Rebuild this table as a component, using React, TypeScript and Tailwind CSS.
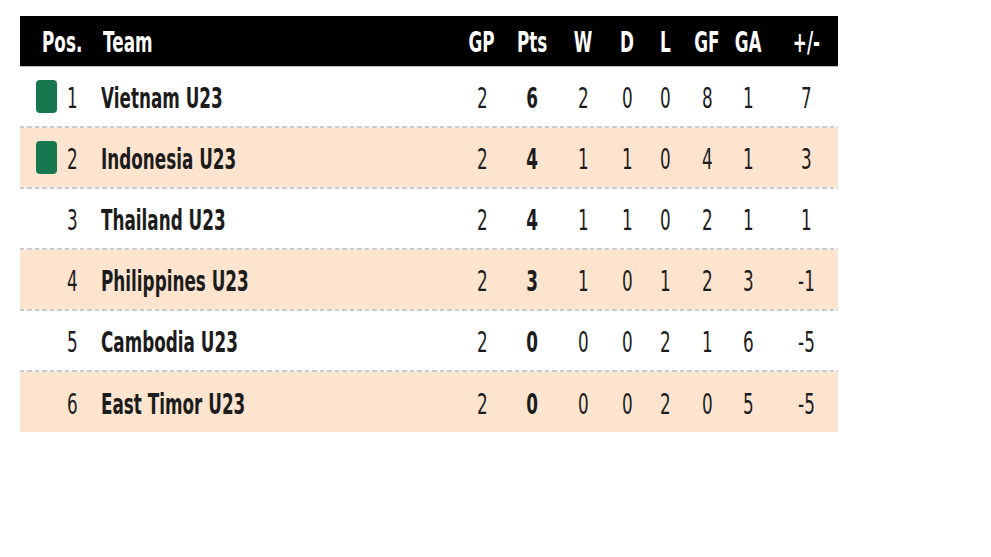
const teams = [
  { pos: 1, name: "Vietnam U23", gp: 2, pts: 6, w: 2, d: 0, l: 0, gf: 8, ga: 1, diff: "7", qualified: true },
  { pos: 2, name: "Indonesia U23", gp: 2, pts: 4, w: 1, d: 1, l: 0, gf: 4, ga: 1, diff: "3", qualified: true },
  { pos: 3, name: "Thailand U23", gp: 2, pts: 4, w: 1, d: 1, l: 0, gf: 2, ga: 1, diff: "1", qualified: false },
  { pos: 4, name: "Philippines U23", gp: 2, pts: 3, w: 1, d: 0, l: 1, gf: 2, ga: 3, diff: "-1", qualified: false },
  { pos: 5, name: "Cambodia U23", gp: 2, pts: 0, w: 0, d: 0, l: 2, gf: 1, ga: 6, diff: "-5", qualified: false },
  { pos: 6, name: "East Timor U23", gp: 2, pts: 0, w: 0, d: 0, l: 2, gf: 0, ga: 5, diff: "-5", qualified: false },
];

// narrow text: the source table uses a squeezed Verdana-like face
function Narrow({ children, left }: { children: React.ReactNode; left?: boolean }) {
  return (
    <span className={`inline-block whitespace-nowrap scale-x-[0.58] ${left ? "origin-left" : "origin-center"}`}>
      {children}
    </span>
  );
}

function Stat({ w, children, bold, extra }: { w: string; children: React.ReactNode; bold?: boolean; extra?: string }) {
  return (
    <div className={`flex shrink-0 justify-center pt-[4px] ${w} ${bold ? "font-bold" : ""} ${extra ?? ""}`}>
      <Narrow>{children}</Narrow>
    </div>
  );
}

const cols = ["w-[50px]", "w-[51px]", "w-[50px]", "w-[38px]", "w-[38px]", "w-[46px]", "w-[36px]", "w-[72px]"];

export default function App() {
  return (
    <div className="min-h-[557px] bg-white pl-[20px] pt-[16px] font-['DejaVu_Sans','Verdana',sans-serif] text-[29px] leading-none">
      <div className="w-[818px]">
        <div className="flex h-[51px] items-center border-b border-[#bdbdbd] bg-black font-bold text-white">
          <div className="flex w-[437px] shrink-0 items-center pl-[22px] pt-[3px]">
            <div className="w-[61px]">
              <Narrow left>Pos.</Narrow>
            </div>
            <Narrow left>Team</Narrow>
          </div>
          {["GP", "Pts", "W", "D", "L", "GF", "GA", "+/-"].map((h, i) => (
            <div key={h} className={`flex shrink-0 justify-center pt-[3px] ${cols[i]} ${i === 7 ? "pl-2" : ""}`}>
              <Narrow>{h}</Narrow>
            </div>
          ))}
        </div>
        {teams.map((t, idx) => (
          <div key={t.pos}>
            <div
              className={`flex items-center text-[#1c1c1c] ${idx % 2 === 1 ? "bg-[#fde4cf]" : "bg-white"} ${
                idx === teams.length - 1 ? "h-[60px]" : "h-[59px]"
              }`}
            >
              <div className="flex w-[437px] shrink-0 items-center pl-[16px]">
                <div className={`h-[33px] w-[21px] rounded-[4px] ${t.qualified ? "bg-[#17784f]" : ""}`} />
                <div className="flex w-[30px] justify-center pt-[4px]">
                  <Narrow>{t.pos}</Narrow>
                </div>
                <div className="pl-[14px] pt-[4px] font-bold">
                  <Narrow left>{t.name}</Narrow>
                </div>
              </div>
              <Stat w={cols[0]}>{t.gp}</Stat>
              <Stat w={cols[1]} bold>{t.pts}</Stat>
              <Stat w={cols[2]}>{t.w}</Stat>
              <Stat w={cols[3]}>{t.d}</Stat>
              <Stat w={cols[4]}>{t.l}</Stat>
              <Stat w={cols[5]}>{t.gf}</Stat>
              <Stat w={cols[6]}>{t.ga}</Stat>
              <Stat w={cols[7]} extra="pl-2">{t.diff}</Stat>
            </div>
            {idx < teams.length - 1 && (
              <div className="h-[2px] bg-[repeating-linear-gradient(90deg,#cbcbcb_0_4.5px,#f4f4f4_4.5px_7.5px)]" />
            )}
          </div>
        ))}
      </div>
    </div>
  );
}
